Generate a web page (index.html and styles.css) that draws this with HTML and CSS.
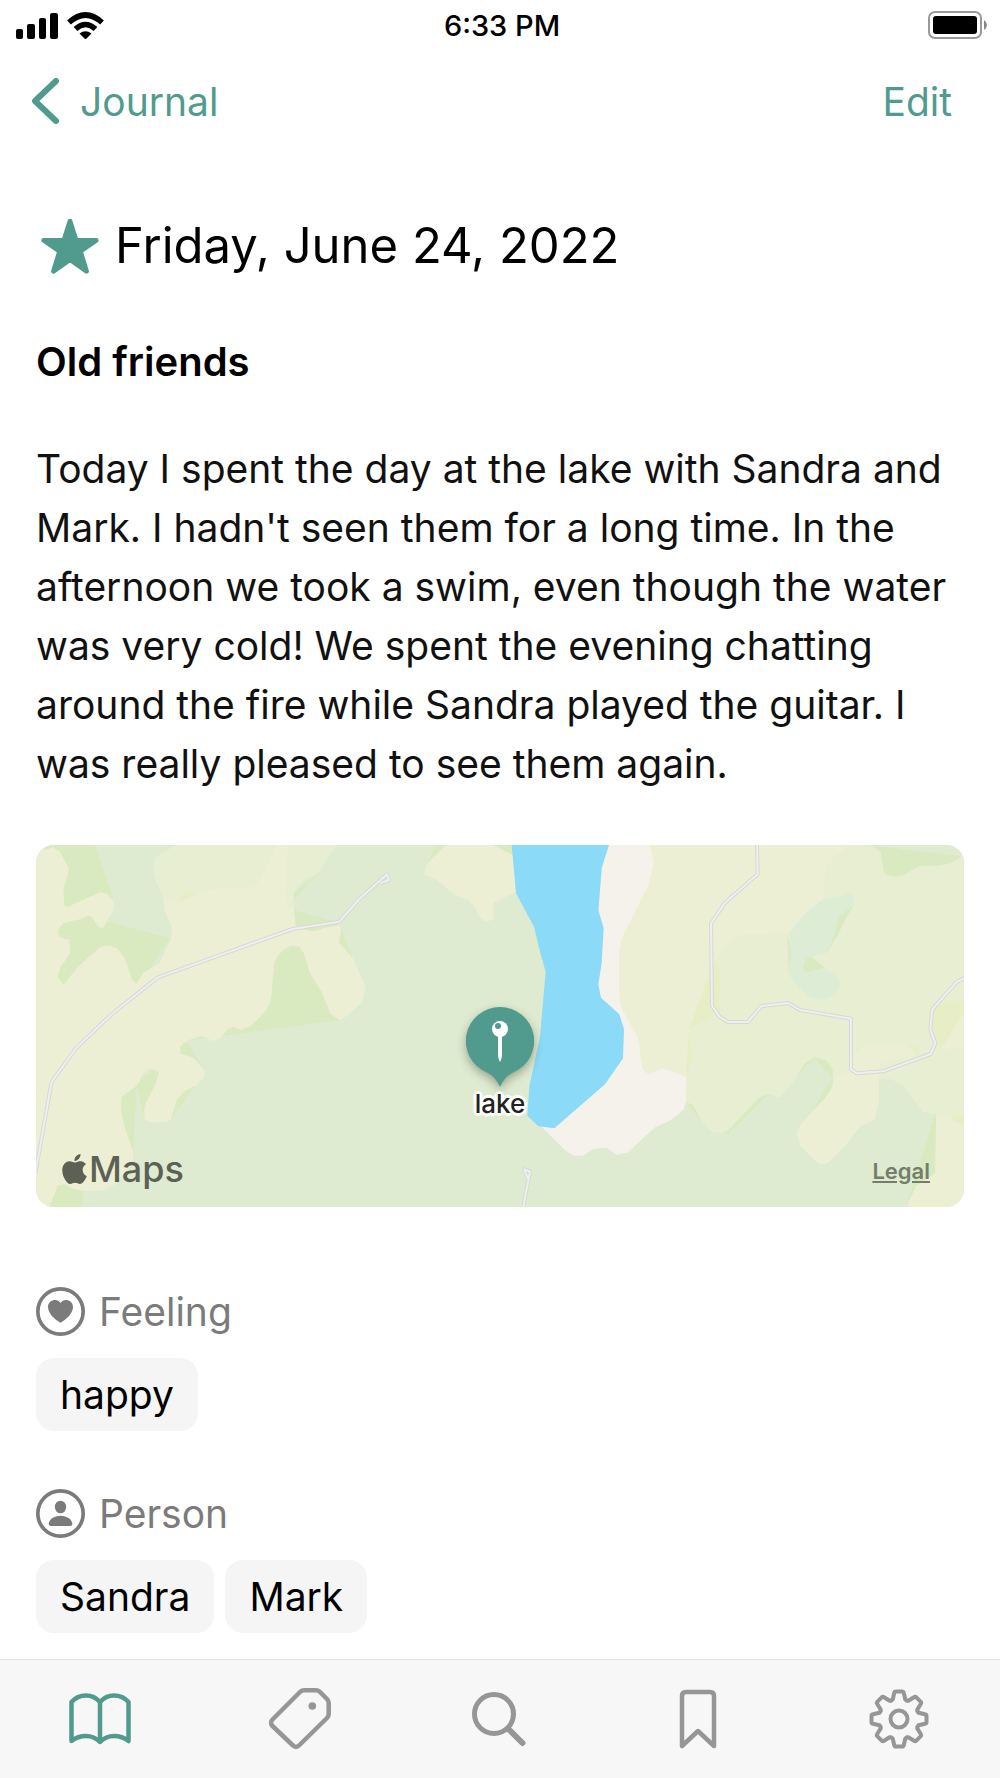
FILE: index.html
```html
<!DOCTYPE html>
<html lang="en">
<head>
  <meta charset="UTF-8">
  <meta name="viewport" content="width=device-width, initial-scale=1">
  <title>Journal</title>
  <link rel="stylesheet" href="styles.css">
</head>
<body>
  <div class="status-bar">
    <div class="status-left">
      <svg width="42" height="27" viewBox="0 0 42 27">
        <rect x="0" y="17" width="7" height="10" rx="2"/>
        <rect x="11" y="12" width="8" height="15" rx="2"/>
        <rect x="23" y="6" width="7" height="21" rx="2"/>
        <rect x="34" y="1" width="8" height="26" rx="2"/>
      </svg>
      <svg width="37" height="27" viewBox="0 0 37 27" fill="none" stroke="#000" stroke-width="5.500">
        <path d="M2 10.500Q18.500 -4.500 35 10.500"/>
        <path d="M8.500 17Q18.500 8 28.500 17"/>
        <path d="M12.500 21.500Q18.500 17 24.500 21.500L18.500 27.500Z" fill="#000" stroke="none"/>
      </svg>
    </div>
    <span class="time">6:33 PM</span>
    <div class="status-right">
      <svg width="60" height="28" viewBox="0 0 60 28">
        <rect x="1" y="1" width="52" height="26" rx="6" fill="none" stroke="#999" stroke-width="2"/>
        <rect x="5" y="5" width="44" height="18" rx="3"/>
        <path d="M56 9Q59 11 59 14T56 19Z" fill="#888"/>
      </svg>
    </div>
  </div>

  <nav class="nav-bar">
    <a href="#" class="back">
      <svg width="28" height="46" viewBox="0 0 28 46" fill="none" stroke="currentColor" stroke-width="6" stroke-linecap="round" stroke-linejoin="round">
        <path d="M24 3L3 23L24 43"/>
      </svg>
      Journal
    </a>
    <button type="button" class="edit">Edit</button>
  </nav>

  <main class="entry">
    <h1>
      <svg class="star" width="58" height="56" viewBox="123 654 172 166" stroke-width="14" stroke-linejoin="round">
        <path d="M209 663L227 720H287L240 753L258 812L209 777L160 812L178 753L131 720H191Z"/>
      </svg>
      Friday, June 24, 2022
    </h1>
    <h2>Old friends</h2>
    <p class="text">Today I spent the day at the lake with Sandra and Mark. I hadn't seen them for a long time. In the afternoon we took a swim, even though the water was very cold! We spent the evening chatting around the fire while Sandra played the guitar. I was really pleased to see them again.</p>

    <div class="map">
      <svg class="map-tiles" viewBox="48 45 2784 1086" preserveAspectRatio="xMidYMid slice">
        <!-- west side -->
        <path class="forest" d="M48 45H225L282 215L265 275L450 325L350 475H100Z"/>
        <path class="forest" d="M893 130L822 188V240L955 278L997 382L1037 468L960 570L500 632L548 712L525 768L453 868L373 865L350 768L340 965L300 900V800L420 700L740 300Z"/>
        <path class="forest" d="M87 1130L113 1060L192 1078L184 1132ZM1248 45H1290L1222 102Z"/>
        <path class="field" d="M48 45H60L75 60L100 52L120 65L147 118L130 180L133 225Q137 235 150 228L240 187L262 192L282 215L280 240L252 290Q243 298 235 290L215 260L205 256L180 268L130 280L113 300L118 322L148 330L150 370L122 412L113 440L130 465L175 410L240 352Q260 340 290 355L315 385L335 448L350 462L370 428L418 400L453 328L455 290L433 240L430 205L403 140Q394 95 418 75L470 45H950L918 90L893 130L850 150L820 185L818 205L827 285Q875 315 910 295L958 285L963 300L957 338L997 382L1037 468L1027 515L985 555L960 570L932 553L905 485L870 430L852 370L838 350Q820 345 805 350Q765 375 763 400L753 510L740 540L693 588L663 600L640 590L620 600L602 625L580 633L545 618L500 632L480 650V670L522 685L553 720V740L525 768L490 785L470 810L453 868L440 877H388L373 865V830L410 755L417 724L390 716L370 730L350 768L305 800L303 840Q310 890 340 965L338 1000L285 1062L245 1082H185L155 1075L135 1062L113 1068L87 1132H48Z"/>
        <path class="meadow" d="M470 45H770L745 100Q715 170 695 170L600 175L525 195L475 220L430 205L403 140Q394 95 418 75Z"/>
        <path class="meadow" d="M803 45H950L918 90L893 130L850 150L820 185V240Q795 235 795 200Z"/>
        <path class="grass" d="M475 220L497 185L525 197Z"/>
        <path class="field" d="M1278 45L1222 100L1213 133L1255 152L1300 192L1345 210L1360 225L1382 265L1398 273L1420 270V218L1500 180V45Z"/>
        <path class="forest" d="M1418 45H1480V75Z"/>

        <!-- east side -->
        <g transform="translate(1410 0)">
          <path class="forest" d="M588 815L615 828L642 880L710 905L800 805L835 790L900 770L930 710L975 682L1010 692L1028 720L1030 745L1338 848L1335 1030L1278 1068L1248 1132L1330 850H1150L920 940L720 915L642 885Z"/>
          <path class="field" d="M380 45H1424V1132H1248L1278 1068L1335 1030L1338 850L1297 845L1245 770L1205 748L1168 746V810L1155 870L1110 890L1060 955L1010 1002H985L930 948L920 908L930 885L1005 803L1027 770L1030 740L975 685L900 770L868 803L832 792L805 805L715 900Q690 917 665 903L640 880L610 825L588 815L560 740H380Z"/>
          <path class="forest-core" d="M1168 746L1205 748L1245 770L1297 845L1338 850L1248 1132H900L930 948L985 1002H1010L1060 955L1110 890L1155 870L1168 810Z"/>
          <path class="forest-core" d="M720 905L832 795L868 803L930 885L920 908L930 948L985 1002L700 1040Z"/>
          <path class="forest" d="M715 900L805 805L832 792L780 832Z"/>
          <path class="meadow" d="M1080 45Q1010 90 1005 130L1000 205L900 308L770 312Q685 340 682 395L692 450L690 530L600 595L608 690L590 740L588 815L610 825L640 880L665 903Q690 917 715 900L805 805L832 792L868 803L900 770L930 710L975 685L1030 742L1075 725L1100 665L1125 645H1250L1290 675L1200 688L1168 705V746L1205 748L1245 770L1297 845L1424 870V650L1350 660L1424 545V45Z"/>
          <path class="grass" d="M658 430V525L690 540L692 450L680 385ZM658 430L597 598L690 545ZM597 598L608 690L588 742ZM1325 540L1345 512H1424V545L1350 660L1320 600ZM1380 865L1424 850V890ZM1250 645L1285 652V680Z"/>
          <path class="forest-core" d="M868 803L900 770L920 735L975 685L1030 742L1027 770L1005 803L930 885Z"/>
          <path class="forest" d="M920 735L945 700L975 682L1010 692L1028 720L1030 745L975 688ZM1030 740L1027 770L1005 803L960 850ZM1338 850L1335 1030L1278 1068L1248 1132ZM1143 45L1172 67L1182 128Q1205 145 1240 135L1288 108L1350 107Q1390 100 1416 77Z"/>
          <path class="forest-core" d="M1143 45H1400L1416 75Z"/>
          <path class="forest" d="M1090 225L1040 320L1012 368L960 378L1008 415L945 430L895 420L893 310L905 370L1045 260Z"/>
          <path class="marsh" d="M1000 207L1040 203L1070 190L1090 195V225L1045 262L1035 310L1012 368L968 378Q942 380 940 410Q940 432 958 428L1002 412L1040 438L1054 465L1035 495L1000 510L960 502L910 455L893 425L905 370L898 310L945 250Z"/>
          <path class="beach" d="M340 45H480L491 98L475 165L395 325L387 370V470Q388 520 397 540L443 622L458 718L475 733L515 716L545 722L588 742V815L580 840L540 872L495 892L412 968L380 974L350 953L310 957L280 977H250L225 960L155 890L300 600Z"/>
          <path class="water" d="M65 45H357L335 115L325 240L341 295L335 400L325 463L333 503L388 553L402 598L399 685L345 763L193 895L145 889L112 857L118 768L150 620L167 425L150 365L132 290L78 190Z"/>
        </g>

        <path class="road-edge" d="M1080 160L1107 150L1101 133L1018 207L958 275L818 297L412 443L272 555L168 655L95 755L46 1030M2211 45L2213 133L2115 218L2073 280L2076 527L2098 560L2124 576H2184L2224 528L2304 519L2340 540L2493 566V718L2510 730L2590 724L2732 672L2746 640L2731 598L2737 538L2810 456L2836 443M1508 1140L1530 1025L1513 1018L1523 1045"/>
        <path class="road" d="M1080 160L1107 150L1101 133L1018 207L958 275L818 297L412 443L272 555L168 655L95 755L46 1030M2211 45L2213 133L2115 218L2073 280L2076 527L2098 560L2124 576H2184L2224 528L2304 519L2340 540L2493 566V718L2510 730L2590 724L2732 672L2746 640L2731 598L2737 538L2810 456L2836 443M1508 1140L1530 1025L1513 1018L1523 1045"/>
      </svg>

      <div class="marker">
        <svg width="68" height="80" viewBox="0 0 68 80">
          <path d="M34 0A34 34 0 0 1 47 65.500C40 69 37 74 34 80C31 74 28 69 21 65.500A34 34 0 0 1 34 0Z" fill="#509b8d"/>
          <path d="M32 28H36V46Q36 52 34 55Q32 52 32 46Z" fill="#fff"/>
          <circle cx="34" cy="22" r="8" fill="#fff"/>
          <circle cx="32" cy="19" r="3" fill="#509b8d"/>
        </svg>
        <span>lake</span>
      </div>
      <div class="map-brand">
        <svg width="25" height="30" viewBox="2 0 20 24" fill="currentColor">
          <path d="M12.152 6.896c-.948 0-2.415-1.078-3.960-1.040-2.040.027-3.910 1.183-4.961 3.014-2.117 3.675-.546 9.103 1.519 12.090 1.013 1.454 2.208 3.090 3.792 3.039 1.520-.065 2.090-.987 3.935-.987 1.831 0 2.350.987 3.960.948 1.637-.026 2.676-1.480 3.676-2.948 1.156-1.688 1.636-3.325 1.662-3.415-.039-.013-3.182-1.221-3.220-4.857-.026-3.040 2.480-4.494 2.597-4.559-1.429-2.090-3.623-2.324-4.390-2.376-2-.156-3.675 1.090-4.610 1.090zM15.530 3.830c.843-1.012 1.400-2.427 1.245-3.830-1.207.052-2.662.805-3.532 1.818-.780.896-1.454 2.338-1.273 3.714 1.338.104 2.715-.688 3.559-1.701"/>
        </svg>
        Maps
      </div>
      <a href="#" class="legal">Legal</a>
    </div>

    <section class="group">
      <h3>
        <svg width="49" height="49" viewBox="0 0 147 147" fill="currentColor">
          <circle cx="73.500" cy="73.500" r="68" fill="none" stroke="currentColor" stroke-width="11"/>
          <path d="M73.500 107C55 96 36 79 36 59C36 39 64 31 73.500 48C83 31 111 39 111 59C111 79 92 96 73.500 107Z"/>
        </svg>
        Feeling
      </h3>
      <div class="chips"><span class="chip">happy</span></div>
    </section>

    <section class="group">
      <h3>
        <svg width="49" height="49" viewBox="0 0 147 147" fill="currentColor">
          <circle cx="73.500" cy="73.500" r="68" fill="none" stroke="currentColor" stroke-width="11"/>
          <ellipse cx="73.500" cy="54" rx="17" ry="19"/>
          <path d="M38 105C38 92 54 80 73.500 80S109 92 109 105Q109 111 102 111H45Q38 111 38 105Z"/>
        </svg>
        Person
      </h3>
      <div class="chips"><span class="chip">Sandra</span><span class="chip">Mark</span></div>
    </section>
  </main>

  <nav class="tab-bar">
    <a href="#" class="tab active" aria-label="Journal">
      <svg viewBox="0 0 62 62" stroke-width="4.500">
        <path d="M31 14C27 9.500 22 7.500 17 7.500S6.500 9.500 2.500 14V53C7 49.500 12 48 17 48S27 50 31 54C35 50 40 48 45 48S55 49.500 59.500 53V14C55.500 9.500 50 7.500 45 7.500S35 9.500 31 14V54"/>
      </svg>
    </a>
    <a href="#" class="tab" aria-label="Tags">
      <svg viewBox="0 0 62 62" stroke-width="4.500">
        <path d="M35 2.300H47Q49 2.300 51 4L58 11Q59.700 13 59.700 15V26Q59.700 28 58 30L30 57.500Q27 60.500 24 57.500L3.500 38Q.500 34.500 3.500 31.500L31 4Q33 2.300 35 2.300Z"/>
        <circle cx="43.300" cy="18" r="3.800" fill="currentColor" stroke="none"/>
      </svg>
    </a>
    <a href="#" class="tab" aria-label="Search">
      <svg viewBox="0 0 62 62" stroke-width="5">
        <circle cx="25" cy="26" r="19.500"/>
        <path d="M39.500 41L53.500 55" stroke-width="6"/>
      </svg>
    </a>
    <a href="#" class="tab" aria-label="Bookmarks">
      <svg viewBox="0 0 62 62" stroke-width="4.500">
        <path d="M13 58V8Q13 4 17 4H41Q45 4 45 8V58L29 43Z"/>
      </svg>
    </a>
    <a href="#" class="tab" aria-label="Settings">
      <svg viewBox="-30 -31 62 62" stroke-width="4">
        <defs>
          <path id="tooth" d="M-7.650 -18.500L-6.300 -19.500L-4.800 -26Q-4.500 -27.500 -3 -27.500H3Q4.500 -27.500 4.800 -26L6.300 -19.500L7.650 -18.500"/>
        </defs>
        <use href="#tooth"/>
        <use href="#tooth" transform="rotate(45)"/>
        <use href="#tooth" transform="rotate(90)"/>
        <use href="#tooth" transform="rotate(135)"/>
        <use href="#tooth" transform="rotate(180)"/>
        <use href="#tooth" transform="rotate(225)"/>
        <use href="#tooth" transform="rotate(270)"/>
        <use href="#tooth" transform="rotate(315)"/>
        <circle r="8.500"/>
      </svg>
    </a>
  </nav>
</body>
</html>
```
FILE: styles.css
```css
* {
  box-sizing: border-box;
}
body {
  margin: 0;
  min-height: 100vh;
  display: flex;
  flex-direction: column;
  font-family: Inter, "Liberation Sans", sans-serif;
  font-size: 39px;
  color: #000;
  background: #fff;
}
svg {
  display: block;
  flex: none;
}
a {
  color: inherit;
  text-decoration: none;
}
.status-bar {
  display: grid;
  grid-template-columns: 1fr auto 1fr;
  align-items: center;
  height: 50px;
  padding: 0 12px 0 16px;
}
.status-left {
  display: flex;
  gap: 9px;
}
.status-right {
  display: flex;
  justify-content: flex-end;
}
.time {
  font-size: 29px;
  font-weight: 500;
}
.nav-bar {
  display: flex;
  align-items: center;
  justify-content: space-between;
  height: 102px;
  padding: 0 48px 0 32px;
  color: #509b8d;
}
.back {
  display: flex;
  align-items: center;
  gap: 20px;
}
.edit {
  padding: 0;
  border: none;
  background: none;
  font: inherit;
  color: inherit;
  cursor: pointer;
}
.entry {
  flex: 1;
  padding: 58px 36px 26px;
}
h1 {
  display: flex;
  align-items: center;
  gap: 16px;
  margin: 0 0 52px;
  padding-left: 5px;
  font-size: 49px;
  line-height: 72px;
  font-weight: 400;
}
.star {
  fill: #509b8d;
  stroke: #509b8d;
}
h2 {
  margin: 0 0 49px;
  font-size: 40px;
  line-height: 56px;
  font-weight: 600;
}
.text {
  margin: 0 0 52px;
  line-height: 59px;
  color: #111;
}
.map {
  position: relative;
  height: 362px;
  margin-bottom: 80px;
  border-radius: 18px;
  overflow: hidden;
  background: #deebd0;
}
.map-tiles {
  width: 100%;
  height: 100%;
}
.field {
  fill: #edefd5;
}
.meadow {
  fill: #e8eed2;
}
.grass {
  fill: #e7eec5;
}
.forest {
  fill: #d9eac0;
}
.forest-core {
  fill: #deebd0;
}
.marsh {
  fill: #ddedd5;
}
.beach {
  fill: #f5f2eb;
}
.water {
  fill: #8bdaf7;
}
.road,
.road-edge {
  fill: none;
  stroke: #eeeff0;
  stroke-width: 6;
  stroke-linejoin: round;
}
.road-edge {
  stroke: #d6d9d5;
  stroke-width: 12;
}
.marker {
  position: absolute;
  top: 162px;
  left: 50%;
  transform: translateX(-50%);
  display: flex;
  flex-direction: column;
  align-items: center;
  font-size: 26px;
  line-height: 34px;
  font-weight: 500;
  color: #222;
  text-shadow: 0 0 2px #fff, 3px 0 1px #fff, -3px 0 1px #fff, 0 3px 1px #fff, 0 -3px 1px #fff, 2px 2px 1px #fff, -2px -2px 1px #fff, 2px -2px 1px #fff, -2px 2px 1px #fff;
}
.marker svg {
  filter: drop-shadow(0 4px 5px rgba(0, 0, 0, 0.3));
}
.map-brand {
  position: absolute;
  left: 26px;
  bottom: 16px;
  display: flex;
  align-items: center;
  gap: 2px;
  font-size: 36px;
  line-height: 44px;
  font-weight: 500;
  color: #5c6153;
}
.legal {
  position: absolute;
  right: 34px;
  bottom: 20px;
  font-size: 22px;
  line-height: 32px;
  font-weight: 600;
  color: #747c6c;
  text-decoration: underline;
}
.group {
  margin-bottom: 58px;
}
.group:last-child {
  margin-bottom: 0;
}
h3 {
  display: flex;
  align-items: center;
  gap: 14px;
  height: 49px;
  margin: 0 0 22px;
  font-size: 39px;
  font-weight: 400;
  color: #7b7b7b;
}
.chips {
  display: flex;
  flex-wrap: wrap;
  gap: 11px;
}
.chip {
  padding: 0 24px;
  line-height: 73px;
  border-radius: 18px;
  background: #f5f5f5;
}
.tab-bar {
  position: sticky;
  bottom: 0;
  display: flex;
  align-items: center;
  height: 119px;
  border-top: 1px solid #e2e2e2;
  background: #f7f7f7;
}
.tab {
  flex: 1;
  display: flex;
  justify-content: center;
  color: #969696;
}
.tab.active {
  color: #509b8d;
}
.tab svg {
  width: 62px;
  height: 62px;
  fill: none;
  stroke: currentColor;
  stroke-linecap: round;
  stroke-linejoin: round;
}
```
